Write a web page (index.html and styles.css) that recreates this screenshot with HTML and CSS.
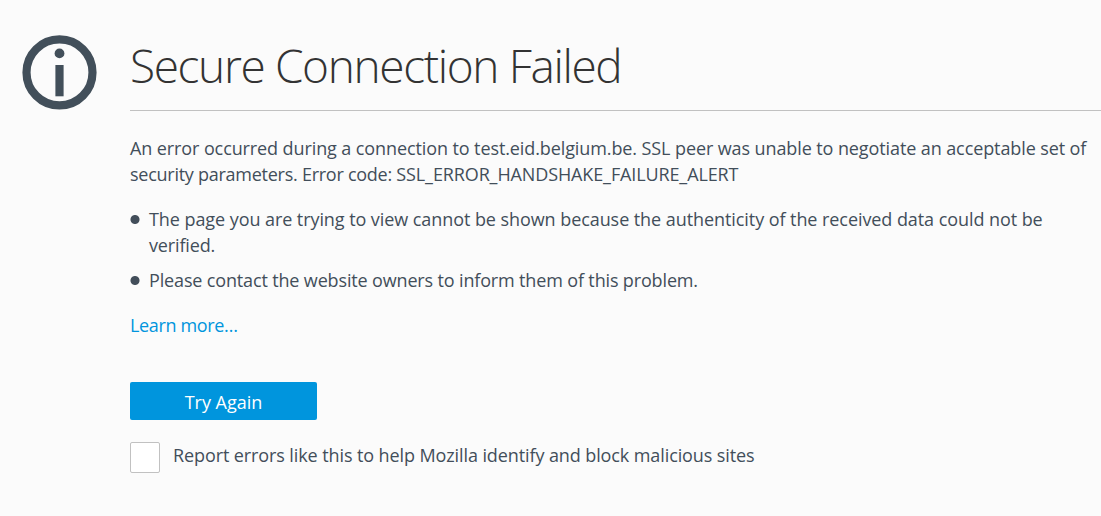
FILE: index.html
```html
<!DOCTYPE html>
<html lang="en">
<head>
<meta charset="utf-8">
<title>Secure Connection Failed</title>
<link rel="stylesheet" href="styles.css">
</head>
<body>
<main class="page">
  <svg class="info" viewBox="0 0 76 76" aria-hidden="true">
    <circle cx="37.5" cy="37.4" r="33" fill="none" stroke="#424f5a" stroke-width="8.2"/>
    <circle cx="37.5" cy="18.4" r="4.9" fill="#424f5a"/>
    <rect x="33.4" y="30" width="8.2" height="31.3" fill="#424f5a"/>
  </svg>
  <div class="content">
    <h1 class="title">Secure Connection Failed</h1>
    <p class="summary">An error occurred during a connection to test.eid.belgium.be. SSL peer was unable to negotiate an acceptable set of<br><span class="lead">security parameters. Error code: </span><span class="code">SSL_ERROR_HANDSHAKE_FAILURE_ALERT</span></p>
    <ul class="reasons">
      <li>The page you are trying to view cannot be shown because the authenticity of the received data could not be<br><span class="tight">verified.</span></li>
      <li class="tight">Please contact the website owners to inform them of this problem.</li>
    </ul>
    <a class="learn">Learn more…</a>
    <button class="retry">Try Again</button>
    <label class="report"><span class="box"></span><span class="report-text">Report errors like this to help Mozilla identify and block malicious sites</span></label>
  </div>
</main>
</body>
</html>
```
FILE: styles.css
```css
body {
  margin: 0;
  background: #fbfbfb;
  color: #424e5a;
  font: 18px/26px "Open Sans", "Noto Sans", sans-serif;
}
.page {
  display: flex;
  gap: 32px;
  height: 516px;
  padding: 35px 0 0 22px;
  box-sizing: border-box;
  overflow: hidden;
}
.info {
  width: 76px;
  height: 76px;
  flex: none;
}
.content {
  flex: 1;
  white-space: nowrap;
}
.title {
  margin: 0;
  height: 75px;
  border-bottom: 1px solid #c1c1c1;
  color: #333;
  font-size: 46px;
  font-weight: 300;
  line-height: 60px;
  letter-spacing: -1.37px;
}
.summary {
  margin: 24px 0 19px;
  letter-spacing: -0.1px;
}
.lead {
  letter-spacing: -0.26px;
}
.code {
  letter-spacing: -0.12px;
}
.reasons {
  margin: 0;
  padding: 0;
  list-style: none;
  letter-spacing: -0.07px;
}
.reasons li {
  display: flow-root;
  margin-bottom: 9px;
  padding-left: 19px;
  background: radial-gradient(circle at 5px 13.5px, #424e5a 4px, transparent 5px);
}
.tight {
  letter-spacing: -0.15px;
}
.learn {
  display: block;
  margin-top: 19px;
  color: #0095dd;
  letter-spacing: -0.35px;
}
.retry {
  display: block;
  width: 187px;
  height: 38px;
  margin-top: 44px;
  padding: 1px 0 0;
  border: 0;
  border-radius: 2px;
  background: #0095dd;
  color: #fff;
  font: inherit;
}
.report {
  display: flex;
  gap: 13px;
  margin-top: 22px;
}
.report-text {
  letter-spacing: -0.1px;
}
.box {
  width: 28px;
  height: 29px;
  border: 1px solid #c1c1c1;
  border-radius: 2px;
  background: #fff;
}
```
